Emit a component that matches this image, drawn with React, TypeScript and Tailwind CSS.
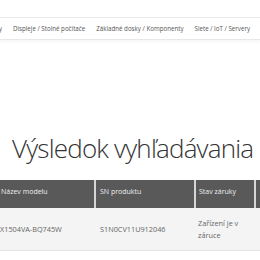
const font = "font-['Open_Sans','Noto_Sans',sans-serif]";

const navItems = ["Displeje / Stolné počítače", "Základné dosky / Komponenty", "Siete / IoT / Servery"];

export default function App() {
  return (
    <div className={`w-[260px] h-[260px] overflow-hidden bg-white ${font}`}>
      <div className="h-[17px]" />
      <nav className="h-[23px] border-y border-[#e8e8e8] shadow-[0_2px_3px_rgba(0,0,0,0.04)] flex items-center gap-[11px] whitespace-nowrap text-[6.2px] text-[#555]">
        <div className="w-[2px] overflow-hidden flex justify-end shrink-0">
          <span className="shrink-0">Notebooky</span>
        </div>
        {navItems.map((item) => (
          <span key={item} className="shrink-0">
            {item}
          </span>
        ))}
      </nav>
      <div className="h-[91px]" />
      <h1 className="pl-[12px] text-[26px] leading-[34px] font-light text-[#333] whitespace-nowrap tracking-[-0.8px]">
        Výsledok vyhľadávania
      </h1>
      <div className="h-[15px]" />
      <div className="w-[300px] text-[7px] whitespace-nowrap">
        <div className="grid grid-cols-[96px_100px_60px_1fr] h-[28px] bg-[#595959] text-[#eee]">
          <div className="flex items-center pl-[1px] pb-[3px] border-r-2 border-[#d6d6d6]">Název modelu</div>
          <div className="flex items-center pl-[4px] pb-[3px] border-r-2 border-[#d6d6d6]">SN produktu</div>
          <div className="flex items-center pl-[3px] pb-[3px] border-r-2 border-[#d6d6d6]">Stav záruky</div>
          <div />
        </div>
        <div className="grid grid-cols-[96px_100px_60px_1fr] h-[43px] bg-[#f4f4f4] text-[#666] text-[7.3px] border-b border-[#e4e4e4]">
          <div className="flex items-center">X1504VA-BQ745W</div>
          <div className="flex items-center pl-[4px]">S1N0CV11U912046</div>
          <div className="flex items-center pl-[2px] leading-[12px] whitespace-normal">Zařízení je v záruce</div>
          <div />
        </div>
      </div>
    </div>
  );
}
